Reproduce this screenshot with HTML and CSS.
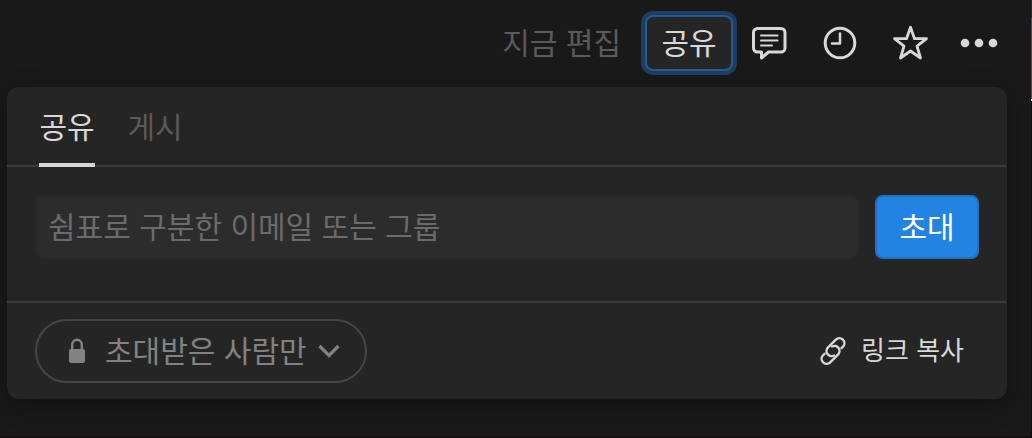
FILE: index.html
```html
<!DOCTYPE html>
<html lang="ko">
<head>
<meta charset="utf-8">
<title>공유</title>
<link rel="stylesheet" href="styles.css">
</head>
<body>
<div class="page">
  <header class="topbar">
    <span class="edited">지금 편집</span>
    <button class="share-button" type="button">공유</button>
    <button class="icon-button" type="button" aria-label="댓글">
      <svg width="38" height="38" viewBox="0 0 38 38" fill="none" stroke="currentColor" stroke-linejoin="round" stroke-linecap="round"><path stroke-width="3" d="M7.500 4.500H31a4 4 0 0 1 4 4V24a4 4 0 0 1-4 4H18.500L11.500 34V28H7.500a4 4 0 0 1-4-4V8.500a4 4 0 0 1 4-4Z"/><path stroke-width="2" d="M11 11.500h16.500M11 16.500h16.500M11 21.500h11"/></svg>
    </button>
    <button class="icon-button" type="button" aria-label="업데이트">
      <svg width="38" height="38" viewBox="0 0 38 38" fill="none" stroke="currentColor" stroke-linecap="round" stroke-linejoin="round"><circle cx="20" cy="19" r="14.800" stroke-width="3"/><path stroke-width="2.500" d="M20 9.500V19.500H12"/></svg>
    </button>
    <button class="icon-button" type="button" aria-label="즐겨찾기">
      <svg width="38" height="38" viewBox="0 0 38 38" fill="none" stroke="currentColor" stroke-width="2.800" stroke-linejoin="round"><path d="M20.500 3.300L24.500 14.700H36.500L27 22.200L30.500 34L20.500 27L10.500 34L14 22.200L4.500 14.700H16.500Z"/></svg>
    </button>
    <button class="icon-button" type="button" aria-label="더보기">
      <svg width="38" height="38" viewBox="0 0 38 38" fill="currentColor"><circle cx="5" cy="19" r="4.300"/><circle cx="19" cy="19" r="4.300"/><circle cx="33" cy="19" r="4.300"/></svg>
    </button>
  </header>
  <main class="panel">
    <nav class="tabs">
      <button class="tab tab-active" type="button">공유</button>
      <button class="tab" type="button">게시</button>
    </nav>
    <form class="invite">
      <input class="invite-input" type="text" aria-label="이메일 또는 그룹" placeholder="쉼표로 구분한 이메일 또는 그룹">
      <button class="invite-button" type="button">초대</button>
    </form>
    <footer class="panel-footer">
      <button class="access" type="button">
        <svg class="lock" width="18" height="26" viewBox="0 0 18 26"><path d="M4.200 12V7a4.800 5.200 0 0 1 9.600 0V12" fill="none" stroke="currentColor" stroke-width="2.400"/><rect x="1" y="11" width="16" height="14" rx="2" fill="currentColor"/></svg>
        <span class="label">초대받은 사람만</span>
        <svg class="chevron" width="22" height="14" viewBox="0 0 22 14" fill="none" stroke="currentColor" stroke-width="3.200"><path d="M1.500 2L11 11.500L20.500 2"/></svg>
      </button>
      <button class="copy-link" type="button">
        <svg width="28" height="28" viewBox="-14 -14 28 28" fill="none" stroke="currentColor" stroke-width="2.400" stroke-linecap="round"><g transform="rotate(-45)"><path d="M-2.500 3.800A5 5 0 0 1-1-6H10A5 5 0 0 1 10 4H8"/><path d="M2.500-3.800A5 5 0 0 1 1 6H-10A5 5 0 0 1-10-4H-8"/></g></svg>
        <span class="label">링크 복사</span>
      </button>
    </footer>
  </main>
</div>
</body>
</html>
```
FILE: styles.css
```css
* {
  box-sizing: border-box;
}

body {
  margin: 0;
  background: #191919;
  color: #d8d8d8;
  font-family: "Noto Sans CJK KR", sans-serif;
  font-size: 30px;
  line-height: 40px;
}

button,
input {
  margin: 0;
  padding: 0;
  border: 0;
  background: none;
  color: inherit;
  font: inherit;
}

svg {
  display: block;
  flex: none;
}

.page {
  min-height: 100vh;
  padding: 15px 25px 37px 7px;
  border-bottom: 2px solid #160f12;
  background: linear-gradient(#2a2145 0 18px, #5b3a96 18px 99px, #f4f4f4 99px 101px, #101014 101px) right top / 1px 100% no-repeat;
}

.topbar {
  display: flex;
  align-items: center;
  justify-content: flex-end;
  padding-right: 9px;
}

.edited {
  margin-right: 24px;
  padding-bottom: 4px;
  color: #5a5a5a;
}

.share-button {
  min-width: 88px;
  height: 56px;
  margin-right: 17px;
  padding: 0 14px 4px;
  border: 2px solid #245a94;
  border-radius: 8px;
  background: #252525;
  box-shadow: 0 0 0 4px #1c3d5e;
}

.icon-button + .icon-button {
  margin-left: 32px;
}

.panel {
  margin-top: 16px;
  border-radius: 12px;
  background: #252525;
  box-shadow: 0 6px 24px rgba(0, 0, 0, 0.3);
}

.tabs {
  display: flex;
  gap: 32px;
  height: 80px;
  padding: 0 32px;
  border-bottom: 2px solid #3b3b3b;
}

.tab {
  min-width: 56px;
  height: 80px;
  border-bottom: 4px solid transparent;
  color: #5a5a5a;
}

.tab-active {
  border-bottom-color: #d8d8d8;
  color: #d8d8d8;
}

.invite {
  display: flex;
  gap: 16px;
  padding: 28px 28px 42px;
}

.invite-input {
  flex: 1;
  min-width: 0;
  height: 64px;
  padding: 0 11px 4px;
  border: 2px solid #292929;
  border-radius: 8px;
  background: #2c2c2c;
}

.invite-input::placeholder {
  color: #6b6b6b;
  opacity: 1;
}

.invite-button {
  width: 104px;
  height: 64px;
  padding-bottom: 4px;
  border: 2px solid #2072c4;
  border-radius: 8px;
  background: #2383e2;
  color: #fff;
}

.panel-footer {
  display: flex;
  align-items: center;
  justify-content: space-between;
  padding: 16px 43px 16px 28px;
  border-top: 2px solid #3b3b3b;
}

.access {
  display: flex;
  align-items: center;
  height: 64px;
  padding: 0 25px 0 31px;
  border: 2px solid #454545;
  border-radius: 32px;
  color: #828282;
}

.label {
  padding-bottom: 4px;
}

.lock {
  margin-right: 19px;
}

.chevron {
  margin-left: 11px;
}

.copy-link {
  display: flex;
  align-items: center;
  gap: 14px;
  font-size: 26px;
}
```
